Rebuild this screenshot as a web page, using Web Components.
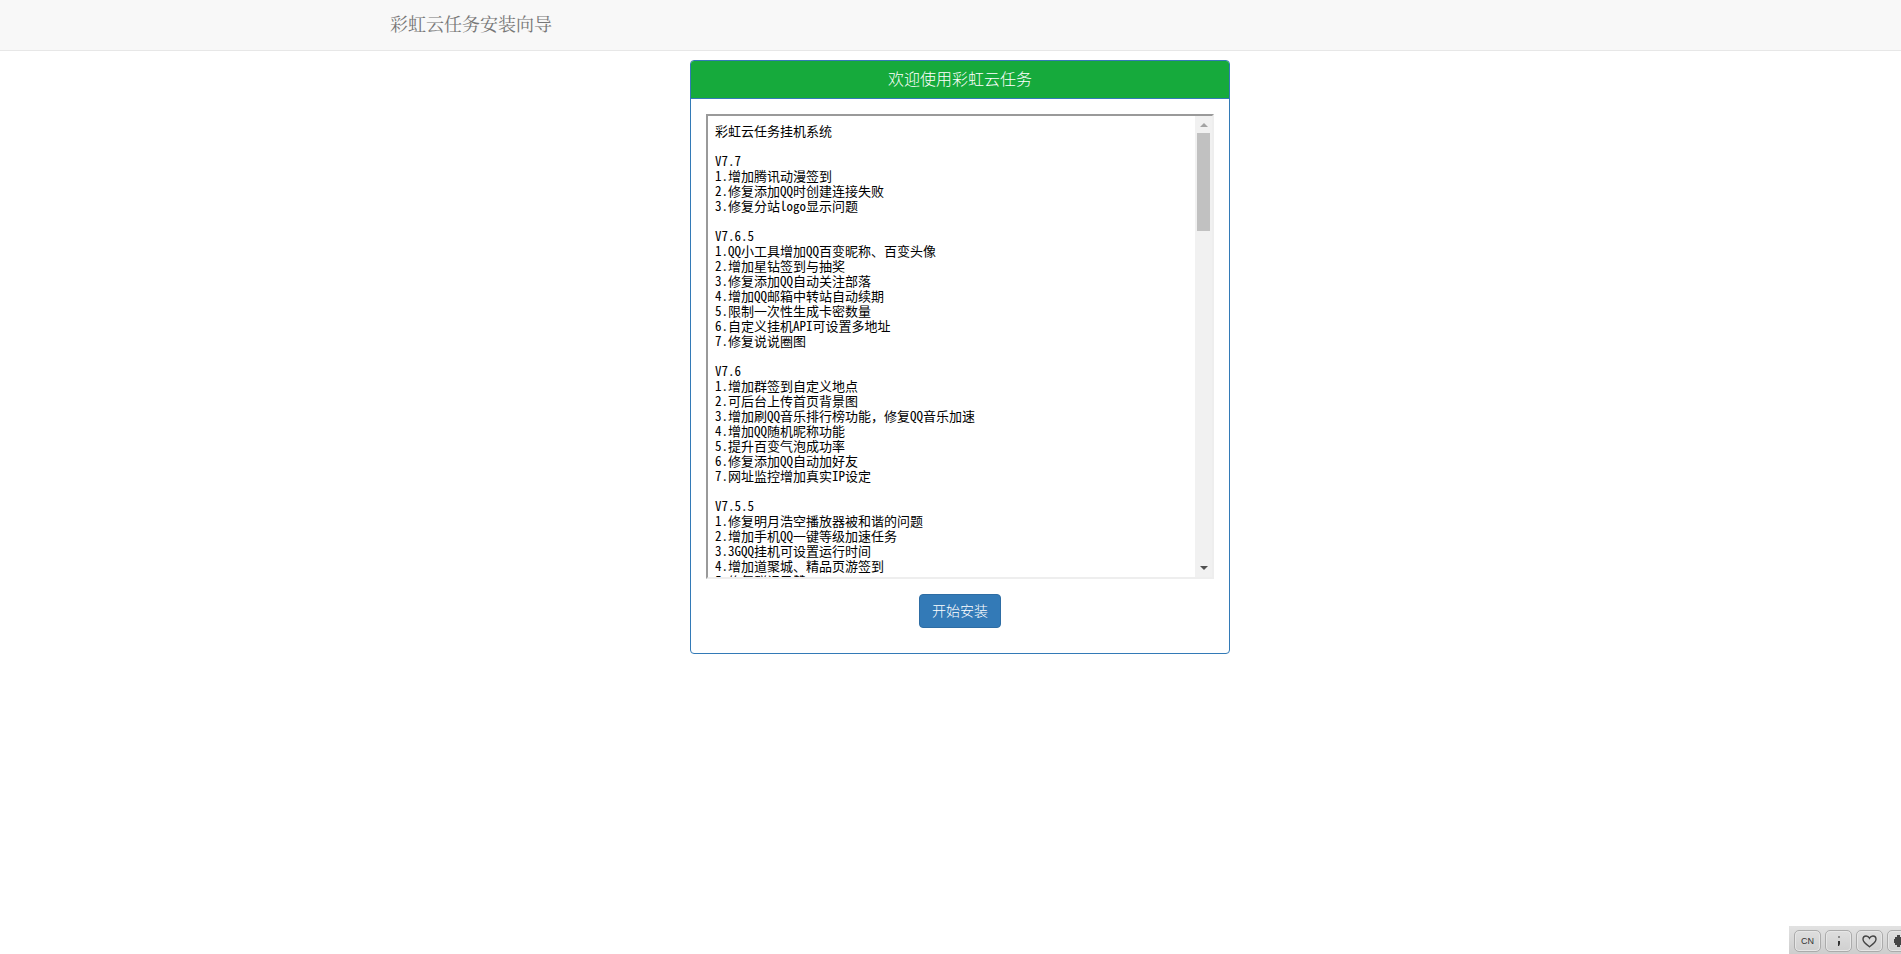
<!DOCTYPE html>
<html lang="zh">
<head>
<meta charset="utf-8">
<title>彩虹云任务安装向导</title>
<style>
  /* the page was laid out in a 1920 wide window, the photo cuts off the right edge */
  html { overflow: hidden; }
  body { margin: 0; padding: 0; width: 1920px; background: #fff; font-family: "Liberation Sans", "Noto Sans CJK SC", sans-serif; font-size: 14px; color: #333; }
</style>
</head>
<body>
<install-navbar>彩虹云任务安装向导</install-navbar>
<install-panel heading="欢迎使用彩虹云任务">
  <changelog-box>彩虹云任务挂机系统

V7.7
1.增加腾讯动漫签到
2.修复添加QQ时创建连接失败
3.修复分站logo显示问题

V7.6.5
1.QQ小工具增加QQ百变昵称、百变头像
2.增加星钻签到与抽奖
3.修复添加QQ自动关注部落
4.增加QQ邮箱中转站自动续期
5.限制一次性生成卡密数量
6.自定义挂机API可设置多地址
7.修复说说圈图

V7.6
1.增加群签到自定义地点
2.可后台上传首页背景图
3.增加刷QQ音乐排行榜功能，修复QQ音乐加速
4.增加QQ随机昵称功能
5.提升百变气泡成功率
6.修复添加QQ自动加好友
7.网址监控增加真实IP设定

V7.5.5
1.修复明月浩空播放器被和谐的问题
2.增加手机QQ一键等级加速任务
3.3GQQ挂机可设置运行时间
4.增加道聚城、精品页游签到
5.修复群记录赞</changelog-box>
  <install-button>开始安装</install-button>
</install-panel>
<tray-bar></tray-bar>

<script>
class InstallNavbar extends HTMLElement {
  constructor() {
    super();
    this.attachShadow({ mode: 'open' });
    this.shadowRoot.innerHTML = `
      <style>
        :host { display: block; height: 50px; background: #f8f8f8; border-bottom: 1px solid #e7e7e7; }
        .brand { display: block; width: 1170px; margin: 0 auto; padding: 0 15px; box-sizing: border-box;
          font: 18px/46px "Noto Serif CJK SC", "Noto Sans CJK SC", serif; color: #777; }
      </style>
      <div class="brand"><slot></slot></div>`;
  }
}

class InstallPanel extends HTMLElement {
  constructor() {
    super();
    this.attachShadow({ mode: 'open' });
    this.shadowRoot.innerHTML = `
      <style>
        :host { display: block; width: 540px; box-sizing: border-box; margin: 9px auto 0; border: 1px solid #337ab7;
          border-radius: 4px; background: #fff; }
        .head { background: #16aa3c; color: #fff; text-align: center; height: 37px; border-bottom: 1px solid #337ab7;
          border-radius: 3px 3px 0 0; font: 300 16px/35px "Noto Sans CJK SC", sans-serif; }
        .body { padding: 15px 15px 25px; display: flex; flex-direction: column; align-items: center; gap: 15px; }
      </style>
      <div class="head"></div>
      <div class="body"><slot></slot></div>`;
  }

  connectedCallback() {
    this.shadowRoot.querySelector('.head').textContent = this.getAttribute('heading');
  }
}

class ChangelogBox extends HTMLElement {
  constructor() {
    super();
    this.attachShadow({ mode: 'open' });
    this.shadowRoot.innerHTML = `
      <style>
        :host { display: flex; width: 508px; height: 465px; box-sizing: border-box; align-self: stretch;
          border: 2px solid; border-color: #9a9a9a #eee #eee #9a9a9a; }
        .text { flex: 1; overflow: hidden; padding: 7px 7px 0; white-space: pre; color: #000;
          font: 13px/15px "Noto Sans Mono CJK SC", "Noto Sans CJK SC", monospace; }
        .rail { width: 17px; background: #f1f1f1; display: flex; flex-direction: column; align-items: center; flex: none; }
        .up, .down { width: 0; height: 0; border: 4px solid transparent; flex: none; }
        .up { border-top: 0; border-bottom-color: #a3a3a3; margin: 7px 0 6px; }
        .down { border-bottom: 0; border-top-color: #505050; margin: auto 0 7px; }
        .thumb { width: 13px; height: 98px; background: #c1c1c1; flex: none; }
      </style>
      <div class="text"><slot></slot></div>
      <div class="rail"><div class="up"></div><div class="thumb"></div><div class="down"></div></div>`;
  }
}

class InstallButton extends HTMLElement {
  constructor() {
    super();
    this.attachShadow({ mode: 'open' });
    this.shadowRoot.innerHTML = `
      <style>
        :host { display: block; }
        button { display: block; height: 34px; padding: 0 12px 2px; border: 1px solid #2e6da4; border-radius: 4px;
          background: #337ab7; color: #fff; font: 300 14px/20px "Noto Sans CJK SC", sans-serif; cursor: pointer; }
      </style>
      <button><slot></slot></button>`;
  }
}

class TrayBar extends HTMLElement {
  constructor() {
    super();
    this.attachShadow({ mode: 'open' });
    this.shadowRoot.innerHTML = `
      <style>
        :host { position: fixed; right: 0; bottom: 0; display: flex; gap: 4px; width: 112px; height: 28px; overflow: hidden;
          box-sizing: border-box; padding: 4px 0 0 5px; background: linear-gradient(#e2e2e2, #cdcdcd); }
        .key { flex: none; width: 27px; height: 22px; box-sizing: border-box; border: 1px solid #ababab; border-radius: 5px;
          background: linear-gradient(#dedede, #d0d0d0); box-shadow: inset 0 0 0 1px #e6e6e6;
          display: flex; align-items: center; justify-content: center; color: #333; font: 9px/1 "Liberation Sans", sans-serif; }
      </style>
      <div class="key">CN</div>
      <div class="key"><svg width="4" height="12" viewBox="0 0 4 12"><rect x="1" y="1" width="2" height="2" fill="#888"/><path d="M1 6h2v3l-1 2h-1z" fill="#333"/></svg></div>
      <div class="key"><svg width="15" height="13" viewBox="0 0 15 13"><path d="M7.500 11.800C3.200 8.800 1 6.800 1 4.300 1 2.400 2.400 1 4.100 1 5.600 1 6.800 1.900 7.500 3.200 8.200 1.900 9.400 1 10.900 1 12.600 1 14 2.400 14 4.300 14 6.800 11.800 8.800 7.500 11.800Z" fill="none" stroke="#444" stroke-width="1.400"/></svg></div>
      <div class="key"><svg width="14" height="14" viewBox="0 0 14 14"><path d="M3 1h3v2h2v2h2v4H8v2H6v2H3v-2H1v-2H0V5h1V3h2z" fill="#444"/></svg></div>`;
  }
}

customElements.define('install-navbar', InstallNavbar);
customElements.define('install-panel', InstallPanel);
customElements.define('changelog-box', ChangelogBox);
customElements.define('install-button', InstallButton);
customElements.define('tray-bar', TrayBar);
</script>
</body>
</html>
